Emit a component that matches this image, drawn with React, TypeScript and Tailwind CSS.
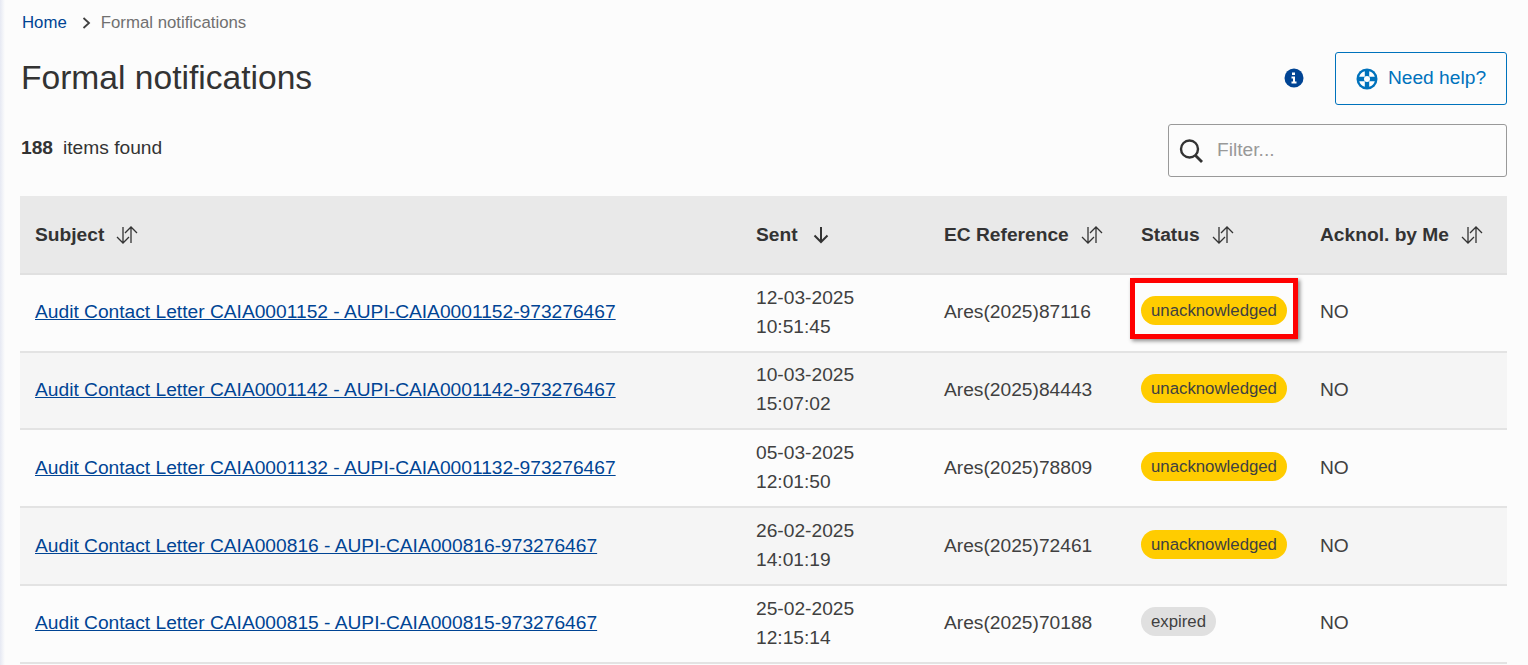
const rows = [
  { subject: "Audit Contact Letter CAIA0001152 - AUPI-CAIA0001152-973276467", date: "12-03-2025", time: "10:51:45", ref: "Ares(2025)87116", status: "unacknowledged", marked: true },
  { subject: "Audit Contact Letter CAIA0001142 - AUPI-CAIA0001142-973276467", date: "10-03-2025", time: "15:07:02", ref: "Ares(2025)84443", status: "unacknowledged" },
  { subject: "Audit Contact Letter CAIA0001132 - AUPI-CAIA0001132-973276467", date: "05-03-2025", time: "12:01:50", ref: "Ares(2025)78809", status: "unacknowledged" },
  { subject: "Audit Contact Letter CAIA000816 - AUPI-CAIA000816-973276467", date: "26-02-2025", time: "14:01:19", ref: "Ares(2025)72461", status: "unacknowledged" },
  { subject: "Audit Contact Letter CAIA000815 - AUPI-CAIA000815-973276467", date: "25-02-2025", time: "12:15:14", ref: "Ares(2025)70188", status: "expired" },
];

const SortIcon = () => (
  <svg width="22" height="20" viewBox="0 0 22 20" fill="none" stroke="#333" strokeWidth="1.3" className="ml-[12px] shrink-0">
    <path d="M7 2v16M1 12 7 18l6-6" />
    <path d="M15 18V2M9 8l6-6 6 6" />
  </svg>
);

const DownIcon = () => (
  <svg width="18" height="20" viewBox="0 0 18 20" fill="none" stroke="#333" strokeWidth="2" className="ml-[14px] shrink-0">
    <path d="M9 2v15M2.500 10.500 9 17l6.500-6.500" />
  </svg>
);

const Th = ({ label, children }: { label: string; children: React.ReactNode }) => (
  <th className="px-[15px] pt-[2px] text-left font-bold text-[19.2px]">
    <span className="flex items-center">
      {label}
      {children}
    </span>
  </th>
);

const Badge = ({ status, marked }: { status: string; marked?: boolean }) => (
  <span className={`relative inline-flex h-[29px] mb-[4px] items-center rounded-full px-[10px] text-[16.8px] ${status === "expired" ? "bg-[#e0e0e0]" : "bg-[#ffcc00]"}`}>
    {status}
    {marked && (
      <span className="absolute left-[-11px] right-[-11px] top-[-18px] bottom-[-14px] border-[5px] border-[#ff0000] shadow-[2px_2px_4px_rgba(0,0,0,0.45)]" />
    )}
  </span>
);

export default function App() {
  return (
    <div className="h-[665px] overflow-hidden bg-[#fcfcfc] text-[#333] font-['Liberation_Sans',Arial,sans-serif] flex">
      <div className="w-[5px] shrink-0 bg-gradient-to-r from-[#e6e9f3] to-[#fcfcfc]" />
      <div className="ml-[15px] w-[1487px]">
        <nav className="flex items-center h-[20px] mt-[13px] text-[16.8px]">
          <a className="ml-[2px] text-[#004494]">Home</a>
          <svg width="12" height="14" viewBox="0 0 12 14" fill="none" stroke="#404040" strokeWidth="1.8" className="ml-[14px]">
            <path d="M2.500 2l5.500 5-5.500 5" />
          </svg>
          <span className="ml-[8px] text-[#707070]">Formal notifications</span>
        </nav>

        <div className="flex items-center justify-between mt-[19px] h-[52px]">
          <h1 className="ml-[1px] text-[33.6px] font-normal">Formal notifications</h1>
          <div className="flex items-center">
            <svg width="20" height="20" viewBox="0 0 20 20" className="mr-[31px]">
              <circle cx="10" cy="10" r="9.500" fill="#004494" />
              <path d="M8 4.500h3v2.500H8zM7.500 8.500H11v5h1.500v2h-5v-2H9v-3H7.500z" fill="#fff" />
            </svg>
            <button className="flex items-center justify-center w-[172px] h-[53px] pt-[1px] rounded-[3px] border border-[#0072bc] text-[#0072bc] text-[19.2px]">
              <svg width="22" height="22" viewBox="0 0 22 22" className="mr-[10px]">
                <circle cx="11" cy="11" r="10.500" fill="#0072bc" />
                <path d="M8.800 8.800 3.200 8.800A8.200 8.200 0 0 1 8.800 3.200ZM13.200 8.800 13.200 3.200A8.200 8.200 0 0 1 18.800 8.800ZM13.200 13.200 18.800 13.200A8.200 8.200 0 0 1 13.200 18.800ZM8.800 13.200 8.800 18.800A8.200 8.200 0 0 1 3.200 13.200Z" fill="#fff" />
                <circle cx="11" cy="11" r="3" fill="#fff" />
              </svg>
              Need help?
            </button>
          </div>
        </div>

        <div className="flex items-start justify-between mt-[19px] h-[53px]">
          <p className="ml-[1px] text-[19.2px] mt-[11px]">
            <b>188</b>
            <span className="ml-[10px]">items found</span>
          </p>
          <div className="flex items-center w-[339px] h-[53px] mt-[1px] rounded-[3px] border border-[#999] px-[9px]">
            <svg width="26" height="26" viewBox="0 0 26 26" fill="none" stroke="#333" strokeWidth="2.400">
              <circle cx="11.500" cy="11" r="8.500" />
              <path d="M17.500 17.500 24 24" strokeWidth="2.800" />
            </svg>
            <span className="ml-[13px] text-[19.2px] text-[#999]">Filter...</span>
          </div>
        </div>

        <table className="w-[1487px] mt-[20px] table-fixed border-collapse">
          <colgroup>
            <col className="w-[721px]" />
            <col className="w-[188px]" />
            <col className="w-[197px]" />
            <col className="w-[179px]" />
            <col className="w-[202px]" />
          </colgroup>
          <thead>
            <tr className="h-[77.8px] bg-[#e9e9e9] border-b-2 border-[#e0e0e0]">
              <Th label="Subject"><SortIcon /></Th>
              <Th label="Sent"><DownIcon /></Th>
              <Th label="EC Reference"><SortIcon /></Th>
              <Th label="Status"><SortIcon /></Th>
              <Th label="Acknol. by Me"><SortIcon /></Th>
            </tr>
          </thead>
          <tbody className="text-[19.2px] text-[#404040]">
            {rows.map((row, i) => (
              <tr key={i} className={`h-[77.8px] border-b-2 border-[#e3e3e3] ${i % 2 === 1 ? "bg-[#f5f5f5]" : "bg-[#fcfcfc]"}`}>
                <td className="px-[15px]">
                  <a className="text-[#004494] underline">{row.subject}</a>
                </td>
                <td className="px-[15px] pb-[2px] leading-[29px]">
                  {row.date}
                  <br />
                  {row.time}
                </td>
                <td className="px-[15px]">{row.ref}</td>
                <td className="px-[15px]">
                  <Badge status={row.status} marked={row.marked} />
                </td>
                <td className="px-[15px]">NO</td>
              </tr>
            ))}
          </tbody>
        </table>
      </div>
    </div>
  );
}
